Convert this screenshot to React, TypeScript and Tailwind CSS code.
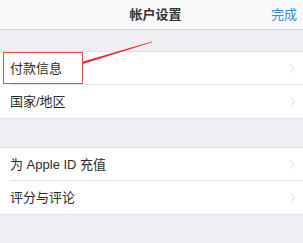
import { ChevronRight } from 'lucide-react';

const font = { fontFamily: '"Liberation Sans", "Noto Sans CJK SC", sans-serif' };

function Row({ label, last }: { label: string; last?: boolean }) {
  return (
    <div className="relative flex h-[33px] items-center bg-white pl-[10px] pr-[3px]">
      <span className="flex-1 text-[13px] text-[#2b2b2b]">{label}</span>
      <ChevronRight size={15} strokeWidth={1.2} className="text-[#cdcdd2]" />
      {!last && <div className="absolute bottom-0 left-[10px] right-0 h-px bg-[#e3e3e6]" />}
    </div>
  );
}

export default function App() {
  return (
    <div className="relative h-[243px] w-[303px] overflow-hidden bg-[#efeff4]" style={font}>
      <div className="flex h-[30px] items-center border-b border-[#d9d9dd] bg-[#f9f9f9] px-[6px]">
        <div className="flex-1" />
        <div className="pl-[8px] text-[13px] font-semibold text-[#333]">帐户设置</div>
        <div className="flex flex-1 justify-end text-[13px] text-[#3b8be0]">完成</div>
      </div>

      <div className="mt-[21px] border-y border-[#e0e0e4]">
        <Row label="付款信息" />
        <Row label="国家/地区" last />
      </div>

      <div className="mt-[28px] border-y border-[#e0e0e4]">
        <Row label="为 Apple ID 充值" />
        <Row label="评分与评论" last />
      </div>

      {/* annotation */}
      <div className="absolute left-[3px] top-[52px] h-[32px] w-[80px] border-[1.5px] border-[#f04848]" />
      <svg className="absolute left-0 top-0" width="303" height="243">
        <polygon points="83,61.5 152,41.5 152,42.3 83,64" fill="#ee2a2a" />
      </svg>
    </div>
  );
}
